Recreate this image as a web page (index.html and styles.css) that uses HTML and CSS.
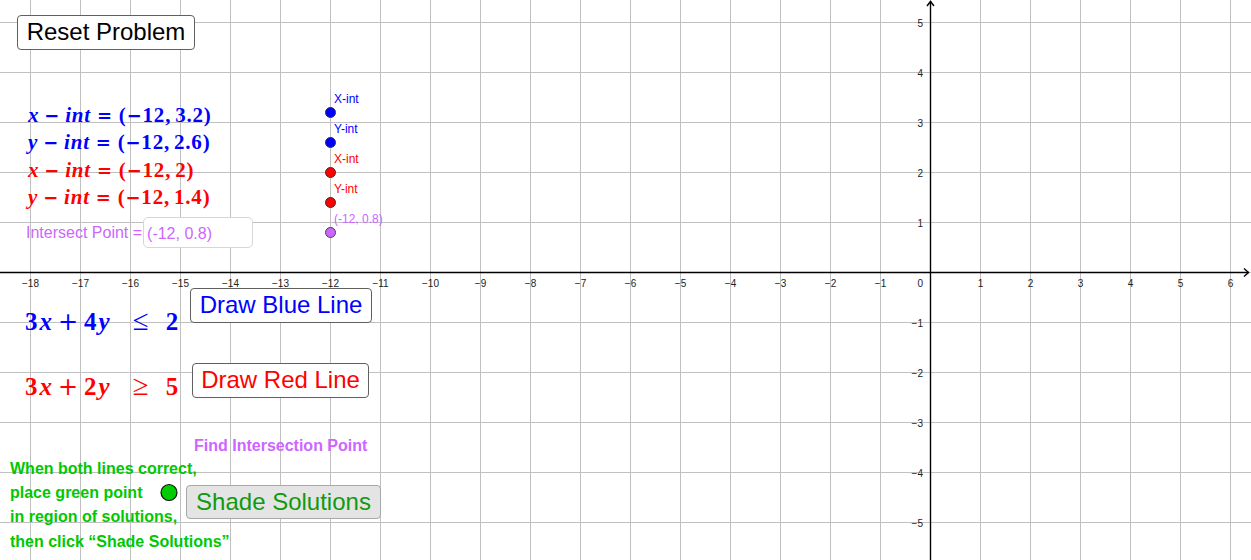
FILE: index.html
```html
<!DOCTYPE html>
<html lang="en">
<head>
<meta charset="utf-8">
<title>Inequalities</title>
<link rel="stylesheet" href="styles.css">
</head>
<body>
<div class="stage">
  <svg class="graph" width="1251" height="560" viewBox="0 0 1251 560" xmlns="http://www.w3.org/2000/svg">
    <g class="grid" id="grid"></g>
    <g class="axes">
      <line x1="0" y1="272.5" x2="1249" y2="272.5"/>
      <line x1="930.5" y1="1" x2="930.5" y2="560"/>
      <polyline points="927,6 930.5,1.5 934,6" fill="none"/>
      <polyline points="1244,268.5 1248.5,272.5 1244,276.5" fill="none"/>
    </g>
    <g class="ticks" id="ticks"></g>
    <g class="points">
      <circle cx="330.5" cy="112.5" r="5" class="pt-blue"/>
      <circle cx="330.5" cy="142.5" r="5" class="pt-blue"/>
      <circle cx="330.5" cy="172.5" r="5" class="pt-red"/>
      <circle cx="330.5" cy="202.5" r="5" class="pt-red"/>
      <circle cx="330.5" cy="232.5" r="5" class="pt-violet"/>
      <circle cx="169" cy="492.5" r="8" class="pt-green"/>
      <text x="334" y="103" class="plabel lbl-blue">X-int</text>
      <text x="334" y="133" class="plabel lbl-blue">Y-int</text>
      <text x="334" y="163" class="plabel lbl-red">X-int</text>
      <text x="334" y="193" class="plabel lbl-red">Y-int</text>
      <text x="334" y="223" class="plabel lbl-violet">(-12, 0.8)</text>
    </g>
  </svg>

  <button class="btn btn-reset">Reset Problem</button>

  <div class="intercepts math">
    <div class="mline blue"><i>x</i><span class="op bin">−</span><i>int</i><span class="op rel">=</span>(<span class="op neg">−</span>12,<span class="thin"></span>3.2)</div>
    <div class="mline blue"><i>y</i><span class="op bin">−</span><i>int</i><span class="op rel">=</span>(<span class="op neg">−</span>12,<span class="thin"></span>2.6)</div>
    <div class="mline red"><i>x</i><span class="op bin">−</span><i>int</i><span class="op rel">=</span>(<span class="op neg">−</span>12,<span class="thin"></span>2)</div>
    <div class="mline red"><i>y</i><span class="op bin">−</span><i>int</i><span class="op rel">=</span>(<span class="op neg">−</span>12,<span class="thin"></span>1.4)</div>
  </div>

  <div class="intersect">
    <span class="intersect-label">Intersect Point =</span>
    <div class="intersect-input">(-12, 0.8)</div>
  </div>

  <div class="ineq ineq-blue math"><span>3</span><i>x</i><span class="op bin2">+</span><span>4</span><i>y</i><span class="rel2">≤</span><span>2</span></div>
  <div class="ineq ineq-red math"><span>3</span><i>x</i><span class="op bin2">+</span><span>2</span><i>y</i><span class="rel2">≥</span><span>5</span></div>

  <button class="btn btn-blue">Draw Blue Line</button>
  <button class="btn btn-red">Draw Red Line</button>

  <div class="find">Find Intersection Point</div>

  <div class="instructions">
    <div>When both lines correct,</div>
    <div>place green point</div>
    <div>in region of solutions,</div>
    <div>then click “Shade Solutions”</div>
  </div>

  <button class="btn btn-shade">Shade Solutions</button>
</div>
<script>
(function () {
  var ns = "http://www.w3.org/2000/svg";
  var grid = document.getElementById("grid");
  var ticks = document.getElementById("ticks");
  function el(name, attrs, parent, text) {
    var e = document.createElementNS(ns, name);
    for (var k in attrs) e.setAttribute(k, attrs[k]);
    if (text !== undefined) e.textContent = text;
    parent.appendChild(e);
    return e;
  }
  var ox = 930.5, oy = 272.5, u = 50;
  for (var i = -18; i <= 6; i++) {
    var x = ox + i * u;
    el("line", {x1: x, y1: 0, x2: x, y2: 560}, grid);
    if (i !== 0) {
      el("text", {x: x, y: 286.5, "text-anchor": "middle"}, ticks, i < 0 ? "\u2212" + (-i) : String(i));
    }
  }
  for (var j = -5; j <= 5; j++) {
    var y = oy - j * u;
    el("line", {x1: 0, y1: y, x2: 1251, y2: y}, grid);
    if (j !== 0) {
      el("text", {x: 923, y: y + 4, "text-anchor": "end"}, ticks, j < 0 ? "\u2212" + (-j) : String(j));
    }
  }
  el("text", {x: 923, y: 286.5, "text-anchor": "end"}, ticks, "0");
})();
</script>
</body>
</html>
```
FILE: styles.css
```css
html, body {
  margin: 0;
  padding: 0;
  background: #ffffff;
}

.stage {
  position: relative;
  width: 1251px;
  height: 560px;
  overflow: hidden;
  background: #ffffff;
  font-family: "Liberation Sans", Arial, sans-serif;
}

.graph {
  position: absolute;
  left: 0;
  top: 0;
  display: block;
}

.grid line {
  stroke: #c0c0c0;
  stroke-width: 1;
}

.axes line,
.axes polyline {
  stroke: #000000;
  stroke-width: 1.4;
}

.ticks text {
  font-family: "Liberation Sans", Arial, sans-serif;
  font-size: 10px;
  fill: #222222;
}

.pt-blue { fill: #0000ff; stroke: #333333; stroke-width: 1; }
.pt-red { fill: #ff0000; stroke: #333333; stroke-width: 1; }
.pt-violet { fill: #cc66ff; stroke: #444444; stroke-width: 1; }
.pt-green { fill: #00cc00; stroke: #111111; stroke-width: 1.2; }

.plabel {
  font-family: "Liberation Sans", Arial, sans-serif;
  font-size: 12px;
}
.lbl-blue { fill: #0000ff; }
.lbl-red { fill: #ff0000; }
.lbl-violet { fill: #cc66ff; }

/* Buttons */
.btn {
  position: absolute;
  display: flex;
  align-items: center;
  justify-content: center;
  box-sizing: border-box;
  margin: 0;
  padding: 0 0 1px 0;
  background: #ffffff;
  border: 1px solid #606060;
  border-radius: 4px;
  font-family: "Liberation Sans", Arial, sans-serif;
  font-size: 24px;
  line-height: 1;
  white-space: nowrap;
}

.btn-reset {
  left: 17px;
  top: 15px;
  width: 178px;
  height: 35px;
  color: #000000;
}

.btn-blue {
  left: 190px;
  top: 288px;
  width: 182px;
  height: 35px;
  color: #0000ff;
}

.btn-red {
  left: 192px;
  top: 363px;
  width: 177px;
  height: 35px;
  color: #ff0000;
}

.btn-shade {
  left: 186px;
  top: 485px;
  width: 195px;
  height: 34px;
  color: #0f9a0f;
  background: #e4e4e4;
  border-color: #a8a8a8;
}

/* Math text */
.math {
  font-family: "Liberation Serif", "Times New Roman", serif;
  font-weight: bold;
}
.math i {
  font-style: italic;
}
.op {
  font-family: "DejaVu Sans", sans-serif;
  font-weight: bold;
}

.intercepts {
  position: absolute;
  left: 28px;
  top: 102px;
  font-size: 21px;
  line-height: 27.3px;
  letter-spacing: 0.8px;
}
.mline {
  white-space: nowrap;
}
.intercepts .bin { margin: 0 5px; font-size: 18px; }
.intercepts .rel { margin: 0 6px; font-size: 18px; }
.intercepts .neg { font-size: 18px; }
.thin { display: inline-block; width: 4px; }

.blue { color: #0000ff; }
.red { color: #ff0000; }

.intersect {
  position: absolute;
  left: 26px;
  top: 217px;
  display: flex;
  align-items: center;
  gap: 1px;
  color: #cc66ff;
  font-size: 16px;
}
.intersect-label {
  white-space: nowrap;
}
.intersect-input {
  box-sizing: border-box;
  width: 110px;
  height: 31px;
  padding: 2px 0 0 3px;
  display: flex;
  align-items: center;
  border: 1px solid #d6d6d6;
  border-radius: 5px;
  background: #ffffff;
  white-space: nowrap;
}

.ineq {
  position: absolute;
  left: 25px;
  font-size: 25px;
  white-space: nowrap;
  line-height: 30px;
  letter-spacing: 2px;
}
.ineq-blue { top: 305px; color: #0000ff; }
.ineq-red { top: 370px; color: #ff0000; }
.ineq .bin2 { margin: 0 4px; font-size: 24px; font-weight: normal; }
.ineq .rel2 {
  margin: 0 17px 0 21px;
  font-family: "Liberation Serif", "Times New Roman", serif;
  font-size: 29px;
  font-weight: normal;
  letter-spacing: 0;
}

.find {
  position: absolute;
  left: 194px;
  top: 437px;
  color: #cc66ff;
  font-size: 16px;
  font-weight: bold;
  white-space: nowrap;
}

.instructions {
  position: absolute;
  left: 10px;
  top: 457px;
  display: flex;
  flex-direction: column;
  color: #00c800;
  font-size: 16px;
  font-weight: bold;
  line-height: 24.2px;
  white-space: nowrap;
}
```
